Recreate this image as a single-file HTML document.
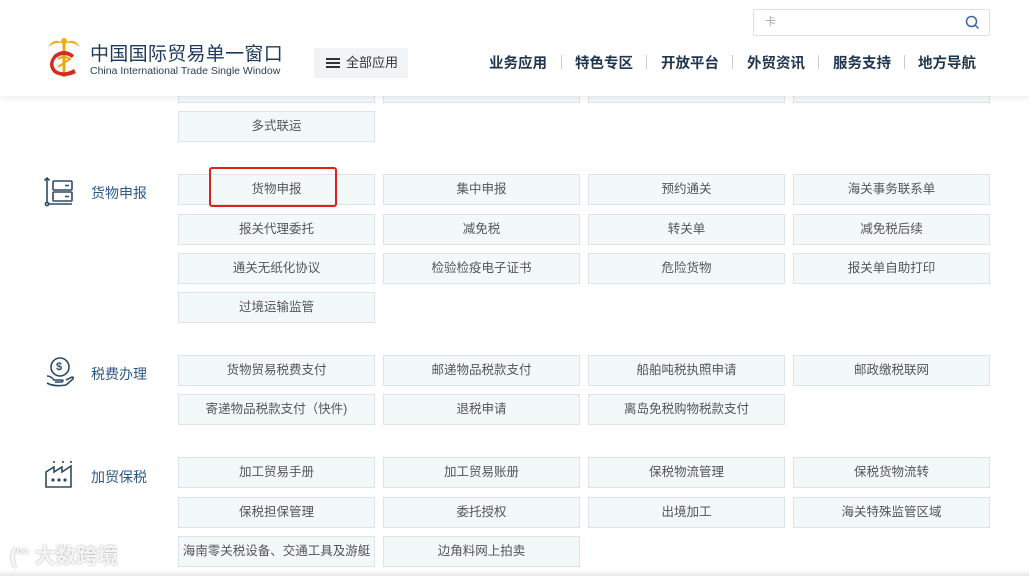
<!DOCTYPE html>
<html><head><meta charset="utf-8"><style>
*{margin:0;padding:0;box-sizing:border-box}
body{width:1029px;height:576px;overflow:hidden;background:#fff;position:relative;font-family:"Liberation Sans","Noto Sans CJK SC",sans-serif}
.b{position:absolute;width:197px;height:31px;background:#f3f8f9;border:1px solid #dde3e6;color:#555;font-size:12.5px;text-align:center;line-height:29px;white-space:nowrap}
.hdr{position:absolute;left:0;top:0;width:1029px;height:96px;background:#fff;box-shadow:0 2px 6px rgba(0,0,0,.08);z-index:5}
.lab{position:absolute;color:#2b5a88;font-size:14px}
.nav{position:absolute;top:52px;font-size:14.5px;font-weight:bold;color:#1f3550}
.sep{position:absolute;top:55px;width:1px;height:14px;background:#ccc}
</style></head><body>
<div class="hdr">
 <svg style="position:absolute;left:44px;top:33px" width="40" height="48" viewBox="0 0 40 48">
  <path d="M4 14 Q10 4 19 10 Q10 9 4 14Z M36 14 Q30 4 21 10 Q30 9 36 14Z" fill="#f0b020"/>
  <circle cx="20" cy="8" r="3" fill="#f0b020"/>
  <rect x="18.5" y="8" width="3" height="36" fill="#e8a818"/>
  <path d="M30 22 Q20 14 10 22 Q2 32 10 40 Q20 46 32 40 L30 36 Q20 42 12 37 Q7 31 12 25 Q20 19 28 25Z" fill="#d42a20"/>
  <path d="M14 26 Q20 22 26 26 Q20 30 14 34" fill="none" stroke="#e8a818" stroke-width="2"/>
 </svg>
 <div style="position:absolute;left:90px;top:39px;font-size:19px;color:#1d3a5c;letter-spacing:0.3px">中国国际贸易单一窗口</div>
 <div style="position:absolute;left:90px;top:65px;font-size:10.5px;color:#2a3f55">China International Trade Single Window</div>
 <div style="position:absolute;left:314px;top:48px;width:94px;height:30px;background:#f1f3f4;font-size:13px;color:#333;line-height:30px;padding-left:32px">全部应用
  <div style="position:absolute;left:12px;top:10px;width:14px;height:2px;background:#333;box-shadow:0 4px 0 #333,0 8px 0 #333"></div></div>
 <div style="position:absolute;left:753px;top:9px;width:237px;height:27px;border:1px solid #dcdfe3;border-radius:2px;font-size:11px;color:#aaa;line-height:25px;padding-left:11px">卡
  <svg style="position:absolute;right:9px;top:5px" width="15" height="15" viewBox="0 0 15 15"><circle cx="6.5" cy="6.5" r="5" fill="none" stroke="#3a6a9a" stroke-width="1.5"/><path d="M10 10L13.5 13.5" stroke="#3a6a9a" stroke-width="1.5"/></svg></div>
 <div class="nav" style="left:489px">业务应用</div><div class="sep" style="left:561px"></div>
 <div class="nav" style="left:575px">特色专区</div><div class="sep" style="left:646px"></div>
 <div class="nav" style="left:661px">开放平台</div><div class="sep" style="left:732px"></div>
 <div class="nav" style="left:747px">外贸资讯</div><div class="sep" style="left:818px"></div>
 <div class="nav" style="left:833px">服务支持</div><div class="sep" style="left:904px"></div>
 <div class="nav" style="left:918px">地方导航</div>
</div>

<div class="b" style="left:178px;top:72px"></div><div class="b" style="left:383px;top:72px"></div><div class="b" style="left:588px;top:72px"></div><div class="b" style="left:793px;top:72px"></div>
<div class="b" style="left:178px;top:111px">多式联运</div>

<svg style="position:absolute;left:44px;top:175px" width="30" height="32" viewBox="0 0 30 32" fill="none" stroke="#2d4a66" stroke-width="1.6">
 <path d="M3 3V28"/><path d="M0.5 5.5L3 3L5.5 5.5"/><circle cx="3" cy="29" r="1.6"/><path d="M4.6 29H28"/>
 <rect x="9" y="6" width="19" height="9" rx="1"/><rect x="9" y="17" width="19" height="9" rx="1"/><path d="M21 10.5h4M21 21.5h4"/></svg>
<div class="lab" style="left:91px;top:183px">货物申报</div>
<div class="b" style="left:178px;top:174px">货物申报</div><div class="b" style="left:383px;top:174px">集中申报</div><div class="b" style="left:588px;top:174px">预约通关</div><div class="b" style="left:793px;top:174px">海关事务联系单</div>
<div style="position:absolute;left:209px;top:167px;width:128px;height:40px;border:2px solid #e0201a;border-radius:3px"></div>
<div class="b" style="left:178px;top:214px">报关代理委托</div><div class="b" style="left:383px;top:214px">减免税</div><div class="b" style="left:588px;top:214px">转关单</div><div class="b" style="left:793px;top:214px">减免税后续</div>
<div class="b" style="left:178px;top:253px">通关无纸化协议</div><div class="b" style="left:383px;top:253px">检验检疫电子证书</div><div class="b" style="left:588px;top:253px">危险货物</div><div class="b" style="left:793px;top:253px">报关单自助打印</div>
<div class="b" style="left:178px;top:292px">过境运输监管</div>

<svg style="position:absolute;left:44px;top:356px" width="32" height="32" viewBox="0 0 32 32" fill="none" stroke="#2d4a66" stroke-width="1.6">
 <circle cx="16" cy="11" r="9"/><path d="M3 20Q7 20 10 24H18Q20 24 18 26H11M3 27Q10 31 22 29L29 23Q30 21 28 21L22 24"/></svg>
<div style="position:absolute;left:56px;top:361px;font-size:11px;font-weight:bold;color:#2d4a66">$</div>
<div class="lab" style="left:91px;top:364px">税费办理</div>
<div class="b" style="left:178px;top:355px">货物贸易税费支付</div><div class="b" style="left:383px;top:355px">邮递物品税款支付</div><div class="b" style="left:588px;top:355px">船舶吨税执照申请</div><div class="b" style="left:793px;top:355px">邮政缴税联网</div>
<div class="b" style="left:178px;top:394px">寄递物品税款支付（快件)</div><div class="b" style="left:383px;top:394px">退税申请</div><div class="b" style="left:588px;top:394px">离岛免税购物税款支付</div>

<svg style="position:absolute;left:44px;top:460px" width="30" height="28" viewBox="0 0 30 28" fill="none" stroke="#2d4a66" stroke-width="1.6">
 <path d="M2 27V12L10 7V12L18 7V12L27 6V27Z"/><path d="M10 3V1M19 3V1M27 3V1"/>
 <circle cx="9" cy="20" r=".8" fill="#2d4a66"/><circle cx="15" cy="20" r=".8" fill="#2d4a66"/><circle cx="21" cy="20" r=".8" fill="#2d4a66"/></svg>
<div class="lab" style="left:91px;top:467px">加贸保税</div>
<div class="b" style="left:178px;top:457px">加工贸易手册</div><div class="b" style="left:383px;top:457px">加工贸易账册</div><div class="b" style="left:588px;top:457px">保税物流管理</div><div class="b" style="left:793px;top:457px">保税货物流转</div>
<div class="b" style="left:178px;top:497px">保税担保管理</div><div class="b" style="left:383px;top:497px">委托授权</div><div class="b" style="left:588px;top:497px">出境加工</div><div class="b" style="left:793px;top:497px">海关特殊监管区域</div>
<div class="b" style="left:178px;top:536px">海南零关税设备、交通工具及游艇</div><div class="b" style="left:383px;top:536px">边角料网上拍卖</div>

<div style="position:absolute;left:10px;top:540px;font-size:21px;font-weight:bold;color:rgba(255,255,255,.85);text-shadow:0 0 2px rgba(0,0,0,.35)">(<span style="font-size:14px;vertical-align:top">ₒₒ</span> 大数跨境</div>
<div style="position:absolute;left:0;top:570px;width:1029px;height:6px;background:linear-gradient(#fff,#e8e8e8)"></div>
</body></html>
